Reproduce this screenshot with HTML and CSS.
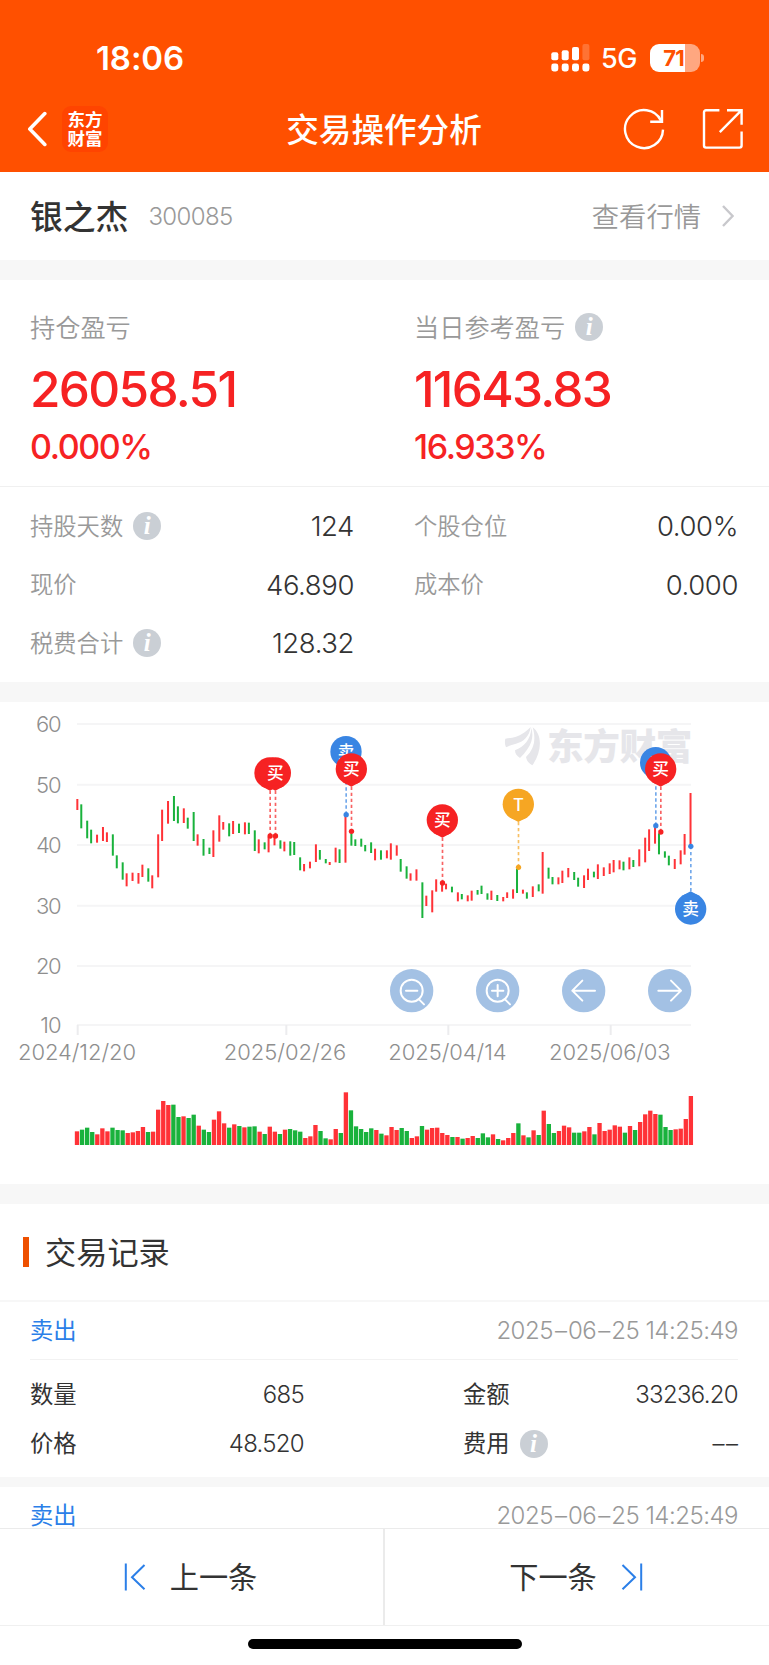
FILE: index.html
```html
<!DOCTYPE html>
<html lang="zh-CN">
<head>
    <meta charset="UTF-8">
    <meta name="viewport" content="width=device-width, initial-scale=1.0">
    <title>交易操作分析</title>
    <link rel="stylesheet" href="styles.css">
</head>
<body>
    <div class="app">
        <header class="header">
            <div class="status">
                <span class="time">18:06</span>
                <div class="status-right">
                    <svg class="signal" width="39" height="28" viewBox="0 0 39 28" fill="#fff">
                        <rect x="0.3" y="8.3" width="7" height="8" rx="2"/>
                        <rect x="10.7" y="6.3" width="7" height="10" rx="2"/>
                        <rect x="21" y="3" width="7" height="13.3" rx="2"/>
                        <rect x="31.4" y="0" width="7" height="16.3" rx="2" opacity="0.2"/>
                        <rect x="0.3" y="19.6" width="7" height="7.8" rx="2.4"/>
                        <rect x="10.7" y="19.6" width="7" height="7.8" rx="2.4"/>
                        <rect x="21" y="19.6" width="7" height="7.8" rx="2.4"/>
                        <rect x="31.4" y="19.6" width="7" height="7.8" rx="2.4"/>
                    </svg>
                    <span class="network">5G</span>
                    <div class="battery"><span>71</span></div>
                </div>
            </div>
            <nav class="nav">
                <div class="nav-left">
                    <svg width="20" height="36" viewBox="0 0 20 36" fill="none" stroke="#fff" stroke-width="3.6" stroke-linecap="round" stroke-linejoin="round"><path d="M17.800 2.600 2.800 18l15 15.400"/></svg>
                    <div class="brand">东方<br>财富</div>
                </div>
                <h1 class="title">交易操作分析</h1>
                <div class="nav-right">
                    <svg width="42" height="42" viewBox="0 0 42 42" fill="none" stroke="#fff" stroke-width="2.4" stroke-linecap="square">
                        <path d="M38 12.6A19 19 0 1 0 40 21.6" stroke-linecap="butt"/>
                        <path d="M39 3.2v10.6H28.4"/>
                    </svg>
                    <svg width="42" height="42" viewBox="0 0 42 42" fill="none" stroke="#fff" stroke-width="2.4">
                        <path d="M17.4 2.2H4a2 2 0 0 0-2 2V37.6a2 2 0 0 0 2 2H37.6a2 2 0 0 0 2-2V23.6"/>
                        <path d="M25 2.2H39.6V16.8M39.6 2.2 17.8 24.2"/>
                    </svg>
                </div>
            </nav>
        </header>

        <main class="content">
            <section class="stock">
                <h2 class="stock-name">银之杰</h2>
                <span class="stock-code">300085</span>
                <a class="quote" href="#"><span>查看行情</span>
                    <svg width="12" height="24" viewBox="0 0 12 24" fill="none" stroke="#c8c8cc" stroke-width="2.4"><path d="M1 2l9.6 10L1 22"/></svg>
                </a>
            </section>

            <section class="profit">
                <div>
                    <div class="profit-label">持仓盈亏</div>
                    <div class="profit-value">26058.51</div>
                    <div class="profit-rate">0.000%</div>
                </div>
                <div>
                    <div class="profit-label">当日参考盈亏<i class="info">i</i></div>
                    <div class="profit-value">11643.83</div>
                    <div class="profit-rate">16.933%</div>
                </div>
            </section>

            <section class="details">
                <div class="detail"><span>持股天数<i class="info">i</i></span><b>124</b></div>
                <div class="detail"><span>个股仓位</span><b>0.00%</b></div>
                <div class="detail"><span>现价</span><b>46.890</b></div>
                <div class="detail"><span>成本价</span><b>0.000</b></div>
                <div class="detail"><span>税费合计<i class="info">i</i></span><b>128.32</b></div>
            </section>

            <section class="chart">
                <!-- three units per css pixel -->
                <svg id="chart" width="769" height="482" viewBox="0 6 2307 1446">
                    <g class="grid" id="grid"></g>
                    <g class="watermark">
                        <path d="M1516 116C1560 112 1574 98 1592 81C1588 110 1570 126 1548 131C1536 134 1526 137 1518 142C1514 134 1514 124 1516 116Z"/>
                        <path d="M1594 84C1602 112 1596 138 1560 174C1550 168 1545 160 1545 151C1572 140 1592 120 1594 84Z"/>
                        <path d="M1598 82C1628 104 1626 156 1597 196C1586 190 1580 182 1578 171C1604 146 1608 116 1598 82Z"/>
                        <text x="1641" y="179" textLength="436">东方财富</text>
                    </g>
                    <g id="candles"></g>
                    <g id="volumes"></g>
                    <g id="markers"></g>
                    <g class="control" transform="translate(1235 872)">
                        <circle r="65"/>
                        <path d="M-17 0H17M22 26 37 41"/><circle class="lens" r="33"/>
                    </g>
                    <g class="control" transform="translate(1493 872)">
                        <circle r="65"/>
                        <path d="M-17 0H17M0-17V17M22 26 37 41"/><circle class="lens" r="33"/>
                    </g>
                    <g class="control" transform="translate(1751 872)">
                        <circle r="65"/>
                        <path d="M34 0H-34M-4-30-34 0-4 30"/>
                    </g>
                    <g class="control" transform="translate(2009 872)">
                        <circle r="65"/>
                        <path d="M-34 0H34M4-30 34 0 4 30"/>
                    </g>
                </svg>
            </section>

            <section class="records">
                <h2 class="records-title"><span>交易记录</span></h2>
                <article class="record">
                    <div class="record-head"><span>卖出</span><time>2025<s>–</s>06<s>–</s>25 14:25:49</time></div>
                    <div class="record-body">
                        <div><span>数量</span><b>685</b></div>
                        <div><span>金额</span><b>33236.20</b></div>
                        <div><span>价格</span><b>48.520</b></div>
                        <div><span>费用<i class="info">i</i></span><b class="empty">––</b></div>
                    </div>
                </article>
                <article class="record">
                    <div class="record-head"><span>卖出</span><time>2025<s>–</s>06<s>–</s>25 14:25:49</time></div>
                </article>
            </section>
        </main>

        <footer class="pager">
            <button type="button">
                <svg width="22" height="28" viewBox="0 0 22 28" fill="none" stroke="#2b7fe8" stroke-width="2"><path d="M1.8 0.5v27M20.5 2 8 14.2l12.5 12"/></svg>
                <span>上一条</span>
            </button>
            <button type="button">
                <span>下一条</span>
                <svg width="22" height="28" viewBox="0 0 22 28" fill="none" stroke="#2b7fe8" stroke-width="2"><path d="M20.2 0.5v27M1.5 2 14 14.2l-12.5 12"/></svg>
            </button>
        </footer>
        <div class="home-bar"></div>
    </div>
    <script src="chart.js"></script>
</body>
</html>
```
FILE: styles.css
```css
* {
    box-sizing: border-box;
}

body {
    margin: 0;
    font-family: Inter, "Noto Sans CJK SC", sans-serif;
    color: #333;
    background: #fff;
}

h1, h2 {
    margin: 0;
}

.app {
    display: flex;
    flex-direction: column;
    height: 1665px;
    overflow: hidden;
}

/* header */
.header {
    height: 172px;
    flex-shrink: 0;
    background: #ff5000;
    color: #fff;
}

.status {
    display: flex;
    justify-content: space-between;
    align-items: center;
    height: 86px;
    padding: 29px 65px 0 96px;
}

.time {
    font-size: 33px;
    font-weight: 600;
    letter-spacing: -0.1px;
}

.status-right {
    display: flex;
    align-items: center;
}

.network {
    margin: 1px 12px 0 11px;
    width: 37px;
    font-size: 27px;
    font-weight: 500;
    letter-spacing: -0.4px;
}

.battery {
    position: relative;
    width: 50px;
    height: 28px;
    margin-right: 4px;
    border-radius: 9px;
    background: linear-gradient(90deg, #fff 70%, #ffa780 70%);
    color: #ff5000;
    font-size: 22px;
    font-weight: 700;
    line-height: 28px;
    text-align: center;
    letter-spacing: -0.8px;
}

.battery span {
    margin-right: 3px;
}

.battery::after {
    content: "";
    position: absolute;
    right: -4px;
    top: 10px;
    width: 3px;
    height: 8px;
    border-radius: 0 3px 3px 0;
    background: #ffa780;
}

.nav {
    display: grid;
    grid-template-columns: 1fr auto 1fr;
    align-items: center;
    height: 86px;
    padding: 0 25px 0 24px;
}

.nav-left, .nav-right {
    display: flex;
    align-items: center;
}

.nav-left {
    gap: 15px;
    padding-left: 3px;
}

.nav-right {
    justify-content: flex-end;
    gap: 37px;
}

.brand {
    width: 46px;
    height: 46px;
    padding-top: 4px;
    border-radius: 9px;
    background: #ff4400;
    font-size: 17.5px;
    font-weight: 700;
    line-height: 19px;
    text-align: center;
}

.title {
    padding-top: 2px;
    font-size: 32.6px;
    font-weight: 500;
    line-height: 48px;
}

/* stock bar */
.stock {
    display: flex;
    align-items: center;
    height: 88px;
    padding: 0 35px 0 30px;
}

.stock-name {
    padding-top: 2px;
    font-size: 32.8px;
    font-weight: 500;
    line-height: 48px;
}

.stock-code {
    margin-left: 20px;
    font-size: 24px;
    font-weight: 300;
    color: #999;
    letter-spacing: -0.6px;
}

.quote {
    display: flex;
    align-items: center;
    gap: 21px;
    margin-left: auto;
    font-size: 27.3px;
    font-weight: 350;
    color: #999;
    text-decoration: none;
}

.quote span {
    padding-bottom: 3px;
}

.content {
    flex: 1;
    min-height: 0;
    overflow: hidden;
}

/* profit */
.profit {
    display: grid;
    grid-template-columns: 1fr 1fr;
    column-gap: 60px;
    height: 227px;
    padding: 27px 31px 0 30px;
    border-top: 20px solid #f7f7f7;
    border-bottom: 1px solid #f0f0f0;
}

.profit-label {
    display: flex;
    align-items: center;
    height: 40px;
    padding-bottom: 3px;
    font-size: 25.2px;
    font-weight: 350;
    color: #999;
}

.profit-value {
    height: 68px;
    margin-top: 8px;
    font-size: 49.5px;
    font-weight: 500;
    line-height: 68px;
    color: #f62223;
    letter-spacing: -1.7px;
}

.profit-rate {
    font-size: 34px;
    font-weight: 500;
    line-height: 48px;
    color: #f62223;
    letter-spacing: -1.4px;
}

.info {
    display: inline-block;
    width: 28px;
    height: 28px;
    margin: 3px 0 0 10px;
    border-radius: 50%;
    background: #cacfd5;
    color: #fff;
    font: italic bold 25px/27px "Liberation Serif", serif;
    text-align: center;
}

.details {
    display: grid;
    grid-template-columns: 1fr 1fr;
    grid-auto-rows: 58.5px;
    column-gap: 60px;
    height: 215px;
    padding: 10px 31px 0 30px;
    border-bottom: 20px solid #f7f7f7;
}

.detail, .record-body > div {
    display: flex;
    justify-content: space-between;
    align-items: center;
}

.detail span {
    display: flex;
    align-items: center;
    padding-bottom: 3px;
    font-size: 23.3px;
    font-weight: 350;
    color: #999;
}

.detail b {
    font-size: 27.5px;
    font-weight: 350;
    letter-spacing: -0.4px;
}

/* chart */
.chart {
    height: 502px;
    border-bottom: 20px solid #f7f7f7;
}

.chart svg {
    display: block;
}

.grid line {
    stroke: #f5f5f6;
    stroke-width: 6;
}

.grid .tick {
    stroke: #ececee;
}

.grid text {
    font-size: 66px;
    font-weight: 300;
    fill: #8e8e8e;
}

.watermark {
    fill: #e6e6ea;
    font-size: 110px;
    font-weight: 900;
}

.up {
    fill: #ff3237;
}

.down {
    fill: #19b23c;
}

.pin text {
    font-size: 50px;
    font-weight: 500;
    fill: #fff;
    text-anchor: middle;
}

.pin line {
    stroke-width: 5;
    stroke-dasharray: 10 8;
    opacity: 0.7;
}

.control circle {
    fill: #a3c1e4;
}

.control path, .control .lens {
    fill: none;
    stroke: #fff;
    stroke-width: 6;
    stroke-linecap: round;
    stroke-linejoin: round;
}

/* records */
.records-title {
    display: flex;
    align-items: center;
    height: 98px;
    padding-left: 23px;
    border-bottom: 2px solid #f7f7f7;
    font-size: 31.2px;
    font-weight: 400;
}

.records-title span {
    padding-bottom: 4px;
}

.records-title::before {
    content: "";
    width: 6px;
    height: 30px;
    margin-right: 16px;
    background: #ee5000;
}

.record {
    padding: 0 31px 0 30px;
    border-bottom: 10px solid #f7f7f7;
}

.record-head {
    display: flex;
    justify-content: space-between;
    align-items: center;
    height: 58px;
    border-bottom: 1px solid #f2f2f2;
    font-size: 23.3px;
    font-weight: 400;
    color: #2b7fe8;
}

.record-head span {
    padding-bottom: 3px;
}

.record-head time {
    font-size: 24px;
    font-weight: 300;
    color: #999;
    letter-spacing: -0.5px;
}

.record-head s {
    margin: 0 1.5px 0 2px;
    text-decoration: none;
}

.record-body {
    display: grid;
    grid-template-columns: 274px 275px;
    grid-auto-rows: 49px;
    column-gap: 159px;
    height: 117px;
    padding-top: 10px;
    font-size: 23.3px;
}

.record-body span {
    display: flex;
    align-items: center;
    padding-bottom: 3px;
}

.record-body b {
    font-size: 24px;
    font-weight: 350;
    letter-spacing: -0.7px;
}

.record-body .empty {
    letter-spacing: 1.5px;
    margin-right: -1.5px;
}

/* bottom pager */
.pager {
    display: grid;
    grid-template-columns: 383px 1fr;
    height: 98px;
    flex-shrink: 0;
    border-top: 1px solid #ebebeb;
    border-bottom: 1px solid #f0f0f0;
}

.pager button {
    display: flex;
    justify-content: center;
    align-items: center;
    gap: 24px;
    padding: 0 2px 0 0;
    border: none;
    background: #fff;
    font-family: inherit;
    font-size: 29.2px;
    color: #333;
}

.pager button + button {
    border-left: 2px solid #ebebeb;
}

.pager span {
    padding-bottom: 4px;
}

.home-bar {
    width: 274px;
    height: 10px;
    margin: 13px auto 16px;
    flex-shrink: 0;
    border-radius: 5px;
    background: #000;
}
```
FILE: chart.js
```js
// direction, top, bottom, volume
const days = [
    ['u', 297, 330, 41], ['d', 313, 385, 46], ['d', 362, 415, 52], ['d', 389, 430, 39], ['u', 404, 428, 32],
    ['u', 381, 423, 50], ['u', 397, 426, 41], ['d', 403, 467, 52], ['d', 466, 505, 45], ['d', 487, 539, 44],
    ['u', 520, 559, 36], ['u', 518, 543, 38], ['u', 519, 551, 42], ['u', 494, 531, 54], ['d', 505, 545, 39],
    ['u', 526, 565, 40], ['u', 403, 532, 106], ['u', 329, 423, 132], ['u', 303, 371, 120], ['d', 288, 363, 121],
    ['d', 319, 370, 84], ['u', 325, 369, 86], ['d', 353, 386, 81], ['d', 336, 423, 91], ['u', 403, 437, 58],
    ['d', 417, 467, 46], ['d', 443, 462, 39], ['u', 391, 471, 76], ['u', 346, 425, 101], ['u', 366, 389, 65],
    ['d', 370, 409, 52], ['u', 363, 402, 62], ['d', 371, 399, 57], ['u', 367, 403, 53], ['d', 368, 402, 55],
    ['d', 391, 453, 56], ['u', 418, 460, 40], ['d', 427, 448, 33], ['u', 410, 457, 55], ['u', 408, 436, 40],
    ['d', 421, 446, 33], ['u', 425, 454, 46], ['d', 424, 467, 48], ['d', 426, 465, 44], ['d', 472, 511, 40],
    ['u', 492, 514, 21], ['u', 485, 505, 26], ['u', 433, 486, 60], ['d', 450, 479, 42], ['d', 477, 490, 20],
    ['u', 486, 495, 17], ['u', 443, 487, 48], ['d', 448, 489, 36], ['u', 350, 488, 158], ['d', 400, 437, 104],
    ['d', 418, 438, 56], ['d', 416, 440, 48], ['d', 435, 454, 39], ['d', 427, 459, 50], ['u', 446, 481, 45],
    ['d', 451, 479, 34], ['u', 451, 475, 29], ['u', 430, 479, 54], ['u', 436, 467, 45], ['d', 477, 515, 51],
    ['d', 499, 536, 42], ['u', 520, 542, 21], ['u', 508, 542, 26], ['d', 547, 654, 57], ['u', 587, 618, 46],
    ['u', 571, 637, 51], ['u', 538, 575, 52], ['u', 550, 575, 36], ['u', 551, 568, 30], ['d', 560, 577, 24],
    ['u', 577, 604, 24], ['d', 582, 598, 19], ['u', 586, 604, 21], ['u', 572, 602, 27], ['d', 570, 584, 21],
    ['d', 557, 582, 35], ['d', 580, 599, 23], ['u', 572, 600, 32], ['d', 585, 603, 18], ['u', 591, 604, 14],
    ['u', 577, 594, 21], ['u', 568, 596, 36], ['d', 507, 579, 65], ['u', 569, 581, 29], ['d', 577, 596, 23],
    ['u', 559, 591, 44], ['d', 553, 574, 30], ['u', 456, 581, 103], ['d', 503, 536, 63], ['d', 531, 553, 36],
    ['u', 532, 553, 42], ['u', 512, 549, 58], ['u', 504, 532, 53], ['d', 516, 540, 37], ['d', 533, 560, 37],
    ['u', 526, 564, 41], ['u', 506, 540, 54], ['d', 515, 532, 32], ['u', 493, 537, 66], ['u', 502, 528, 42],
    ['u', 490, 522, 46], ['u', 480, 517, 59], ['u', 481, 508, 55], ['d', 485, 511, 37], ['u', 472, 508, 57],
    ['d', 480, 501, 45], ['u', 448, 499, 69], ['u', 413, 487, 92], ['u', 388, 453, 103], ['u', 378, 431, 93],
    ['d', 400, 463, 91], ['d', 454, 473, 54], ['d', 467, 496, 45], ['u', 477, 507, 47], ['u', 451, 493, 49],
    ['u', 402, 464, 78], ['u', 279, 436, 147]
];

const red = '#f62223', blue = '#3985e3', orange = '#f6a623';

// label, colour, pin x, pin y, dot y, pointing up
const pins = [
    ['', red, 810, 219, 408], ['买', red, 826, 219, 408],
    ['卖', blue, 1038, 155, 344], ['买', red, 1054, 207, 394],
    ['买', red, 1327, 360, 549], ['T', orange, 1555, 313, 502],
    ['T', blue, 1967, 188, 377], ['买', red, 1982, 207, 396],
    ['卖', blue, 2072, 627, 439, true]
];

const fill = (id, html) => { document.getElementById(id).innerHTML = html; };

let grid = '';
[[60, 72], [50, 254], [40, 435], [30, 617], [20, 798], [10, 975]].forEach(([label, y]) => {
    grid += `<line x1="231" x2="2073" y1="${y}" y2="${y}"/>`;
    grid += `<text x="${label === 10 ? 121 : 108}" y="${label === 10 ? 1000 : y + 24}" textLength="${label === 10 ? 64 : 77}">${label}</text>`;
});
[['2024/12/20', 233, 54, 354], ['2025/02/26', 859, 671, 368], ['2025/04/14', 1345, 1165, 355], ['2025/06/03', 1832, 1647, 365]].forEach(([date, tick, x, w]) => {
    grid += `<line class="tick" x1="${tick}" x2="${tick}" y1="975" y2="1005"/>`;
    grid += `<text x="${x}" y="1080" textLength="${w}">${date}</text>`;
});
fill('grid', grid);

fill('candles', days.map(([dir, top, bottom], i) => {
    const x = 232 + Math.round(i * 2.57 - 0.25) * 5.915;
    return `<rect class="${dir === 'u' ? 'up' : 'down'}" x="${x - 3}" y="${top}" width="6" height="${bottom - top}"/>`;
}).join(''));

fill('volumes', days.map(([dir, , , volume], i) => {
    const x = 231 + i * 15.22;
    return `<rect class="${dir === 'u' ? 'up' : 'down'}" x="${x - 6.5}" y="${1335 - volume}" width="13" height="${volume}"/>`;
}).join(''));

fill('markers', pins.map(([label, color, x, y, dot, up]) => {
    const tip = up ? y - 53 : y + 53;
    const side = up ? y - 38 : y + 38;
    return `<g class="pin" fill="${color}">
        <line x1="${x + 0.5}" x2="${x + 0.5}" y1="${tip}" y2="${dot}" stroke="${color}"/>
        <circle cx="${x + 0.5}" cy="${dot}" r="8"/>
        <circle cx="${x}" cy="${y}" r="47"/>
        <path d="M${x - 28} ${side}L${x} ${tip}L${x + 28} ${side}Z"/>
        <text x="${x}" y="${y + 19}">${label}</text>
    </g>`;
}).join(''));
```
